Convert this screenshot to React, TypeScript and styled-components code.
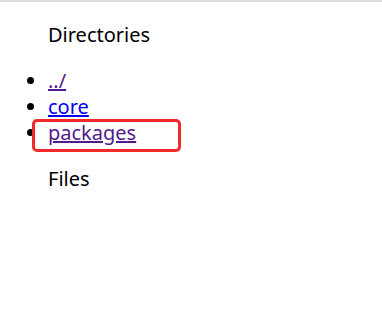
import styled, { createGlobalStyle } from "styled-components";

const GlobalStyle = createGlobalStyle`
  html, body {
    margin: 0;
    padding: 0;
    background: #ffffff;
  }
  body {
    font-family: "Noto Sans", "Open Sans", sans-serif;
  }
`;

const Page = styled.div`
  min-height: 315px;
  box-sizing: border-box;
  border-top: 2px solid #dedede;
  padding: 20px 8px 0;
  font-size: 20px;
  line-height: 26px;
  color: #000000;
`;

const SectionTitle = styled.div`
  padding-left: 40px;
`;

const DirList = styled.ul`
  margin: 20px 0;
  padding-left: 40px;
  list-style: disc;
`;

const Item = styled.li<{ $marked?: boolean }>`
  position: relative;

  ${(props) =>
    props.$marked &&
    `
    &::after {
      content: "";
      position: absolute;
      left: -16px;
      top: -1px;
      width: 149px;
      height: 33px;
      box-sizing: border-box;
      border: 3px solid #f42a2a;
      border-radius: 5px;
      pointer-events: none;
    }
  `}
`;

const Link = styled.a<{ $visited?: boolean }>`
  color: ${(props) => (props.$visited ? "#551a8b" : "#0000ee")};
  text-decoration: underline;
`;

const dirs = [
  { name: "../", visited: true },
  { name: "core", visited: false },
  { name: "packages", visited: true, marked: true },
];

export default function App() {
  return (
    <>
      <GlobalStyle />
      <Page>
        <SectionTitle>Directories</SectionTitle>
        <DirList>
          {dirs.map((d) => (
            <Item key={d.name} $marked={d.marked}>
              <Link href="#" $visited={d.visited}>
                {d.name}
              </Link>
            </Item>
          ))}
        </DirList>
        <SectionTitle>Files</SectionTitle>
      </Page>
    </>
  );
}
